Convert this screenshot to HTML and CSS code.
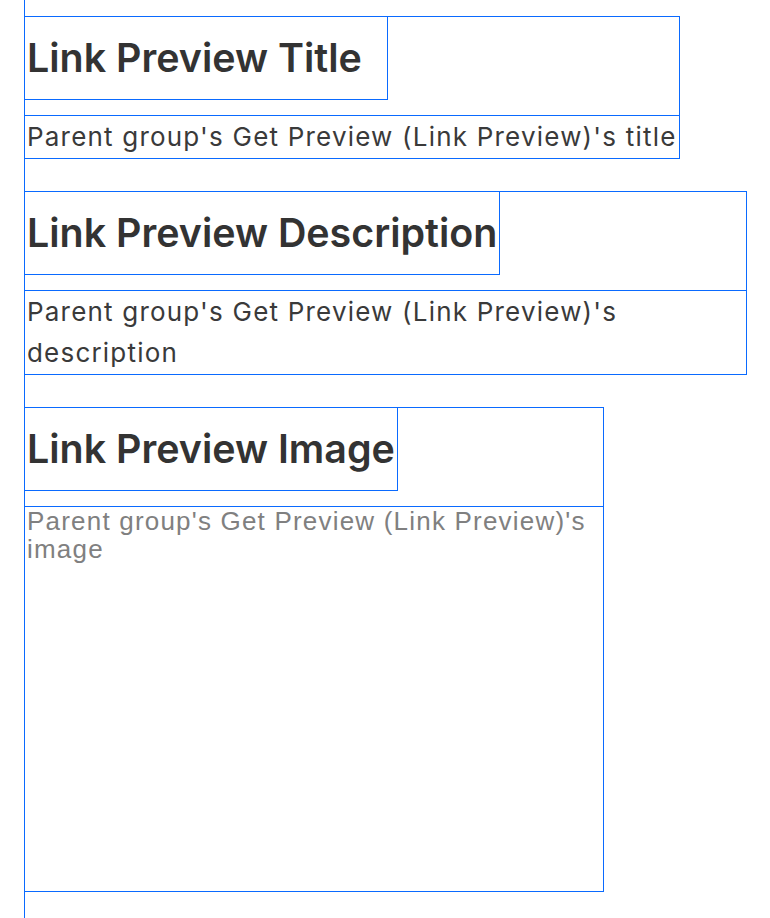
FILE: index.html
```html
<!DOCTYPE html>
<html lang="en">
<head>
    <meta charset="UTF-8">
    <meta name="viewport" content="width=device-width, initial-scale=1.0">
    <title>Link Preview</title>
    <link rel="stylesheet" href="styles.css">
</head>
<body>
    <div class="page">
        <section class="field">
            <h2 class="field-label field-label--wide">Link Preview Title</h2>
            <p class="field-value">Parent group's Get Preview (Link Preview)'s title</p>
        </section>

        <section class="field">
            <h2 class="field-label">Link Preview Description</h2>
            <p class="field-value">Parent group's Get Preview (Link Preview)'s description</p>
        </section>

        <section class="field">
            <h2 class="field-label">Link Preview Image</h2>
            <div class="field-image">Parent group's Get Preview (Link Preview)'s image</div>
        </section>
    </div>
</body>
</html>
```

FILE: styles.css
```css
* {
    margin: 0;
    padding: 0;
    box-sizing: border-box;
    font-family: 'Inter', 'Noto Sans', sans-serif;
}

body {
    background: white;
    color: #333;
}

.page {
    margin-left: 25px;
    padding-top: 17px;
    min-height: 100vh;
    outline: 1px solid #0a6aff;
}

.field {
    width: fit-content;
    max-width: 721px;
    margin-bottom: 34px;
    outline: 1px solid #0a6aff;
}

.field-label {
    width: fit-content;
    padding: 17px 2px;
    margin-bottom: 17px;
    font-size: 39.4px;
    font-weight: 600;
    line-height: 48px;
    color: #333;
    outline: 1px solid #0a6aff;
}

.field-label--wide {
    min-width: 362px;
}

.field-value {
    padding: 0 2px;
    font-size: 26px;
    line-height: 1.6;
    letter-spacing: 1.2px;
    color: #3a3a3a;
    outline: 1px solid #0a6aff;
}

.field-image {
    width: 578px;
    height: 384px;
    padding: 0 2px;
    font-family: 'Liberation Sans', Arial, sans-serif;
    font-size: 26px;
    line-height: 28.5px;
    letter-spacing: 1.2px;
    color: #808080;
    outline: 1px solid #0a6aff;
}
```
